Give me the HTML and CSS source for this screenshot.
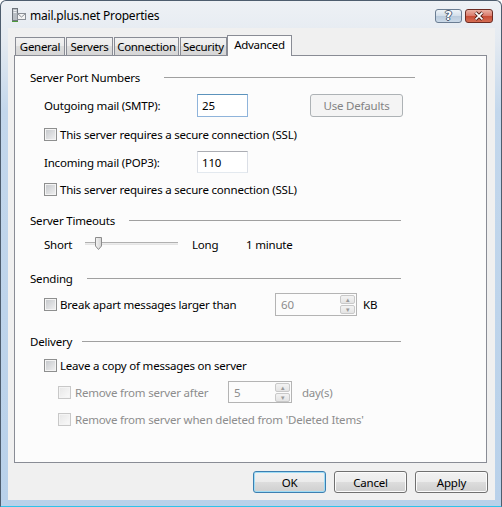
FILE: index.html
```html
<!DOCTYPE html>
<html lang="en">
<head>
    <meta charset="UTF-8">
    <title>mail.plus.net Properties</title>
    <link rel="stylesheet" href="styles.css">
</head>
<body>
    <div class="window">
        <!-- title bar -->
        <div class="titlebar">
            <svg class="app-icon" viewBox="0 0 16 16">
                <rect x="1.5" y="1.5" width="5" height="12" fill="#b9bec4" stroke="#6e747b"/>
                <rect x="2.5" y="3" width="3" height="1" fill="#eef0f2"/>
                <rect x="2.5" y="5" width="3" height="1" fill="#eef0f2"/>
                <rect x="6.5" y="6.5" width="8" height="6" fill="#f4f4f4" stroke="#8a8f96"/>
                <path d="M6.5,6.5 L10.5,10 L14.5,6.5" fill="none" stroke="#8a8f96"/>
                <rect x="1" y="14" width="6" height="1" fill="#4d9a3c"/>
            </svg>
            <span class="title">mail.plus.net Properties</span>
            <div class="caption-buttons">
                <div class="cap-btn help">?</div>
                <div class="cap-btn close">
                    <svg viewBox="0 0 28 14">
                        <path d="M10,3 L18,11 M18,3 L10,11" stroke="#4a1b14" stroke-width="4"/>
                        <path d="M10,3 L18,11 M18,3 L10,11" stroke="#fff" stroke-width="2"/>
                    </svg>
                </div>
            </div>
        </div>

        <div class="client">
            <div class="tabs">
                <div class="tab tab-general">General</div>
                <div class="tab tab-servers">Servers</div>
                <div class="tab tab-connection">Connection</div>
                <div class="tab tab-security">Security</div>
                <div class="tab tab-advanced active">Advanced</div>
            </div>

            <div class="panel">
                <!-- Server Port Numbers -->
                <div class="group-title">
                    <span>Server Port Numbers</span>
                    <span class="rule rule-wide"></span>
                </div>
                <div class="row field-row mt7">
                    <span class="field-label">Outgoing mail (SMTP):</span>
                    <div class="textbox focused">25</div>
                    <button class="btn use-defaults" disabled>Use Defaults</button>
                </div>
                <div class="row mt7">
                    <span class="checkbox"></span>
                    <span class="check-label">This server requires a secure connection (SSL)</span>
                </div>
                <div class="row field-row short mt7">
                    <span class="field-label">Incoming mail (POP3):</span>
                    <div class="textbox">110</div>
                </div>
                <div class="row mt6">
                    <span class="checkbox"></span>
                    <span class="check-label">This server requires a secure connection (SSL)</span>
                </div>

                <!-- Server Timeouts -->
                <div class="group-title mt11">
                    <span>Server Timeouts</span>
                    <span class="rule"></span>
                </div>
                <div class="row mt4">
                    <span class="slider-label">Short</span>
                    <div class="slider">
                        <div class="track"></div>
                        <svg class="thumb" viewBox="0 0 7 13">
                            <defs>
                                <linearGradient id="thumbFill" x1="0" x2="1">
                                    <stop offset="0" stop-color="#f4f4f4"/>
                                    <stop offset="1" stop-color="#d4d4d4"/>
                                </linearGradient>
                            </defs>
                            <path d="M0.5,0.5 H6.5 V9 L3.5,12.5 L0.5,9 Z" fill="url(#thumbFill)" stroke="#8c8c8c"/>
                        </svg>
                    </div>
                    <span class="long-label">Long</span>
                    <span>1 minute</span>
                </div>

                <!-- Sending -->
                <div class="group-title mt14">
                    <span>Sending</span>
                    <span class="rule"></span>
                </div>
                <div class="row field-row mt5">
                    <span class="checkbox"></span>
                    <span class="check-label break-label">Break apart messages larger than</span>
                    <div class="spin kb-spin">
                        <span class="spin-value">60</span>
                        <div class="spin-buttons">
                            <span class="spin-btn">&#9652;</span>
                            <span class="spin-btn">&#9662;</span>
                        </div>
                    </div>
                    <span class="unit">KB</span>
                </div>

                <!-- Delivery -->
                <div class="group-title mt15">
                    <span>Delivery</span>
                    <span class="rule rule-short"></span>
                </div>
                <div class="row mt4">
                    <span class="checkbox"></span>
                    <span class="check-label">Leave a copy of messages on server</span>
                </div>
                <div class="row field-row short sub mt6">
                    <span class="checkbox disabled"></span>
                    <span class="check-label disabled-text days-label">Remove from server after</span>
                    <div class="spin day-spin">
                        <span class="spin-value">5</span>
                        <div class="spin-buttons">
                            <span class="spin-btn">&#9652;</span>
                            <span class="spin-btn">&#9662;</span>
                        </div>
                    </div>
                    <span class="unit days disabled-text">day(s)</span>
                </div>
                <div class="row sub mt6">
                    <span class="checkbox disabled"></span>
                    <span class="check-label disabled-text">Remove from server when deleted from 'Deleted Items'</span>
                </div>
            </div>

            <div class="dialog-buttons">
                <button class="btn default">OK</button>
                <button class="btn">Cancel</button>
                <button class="btn">Apply</button>
            </div>
        </div>
    </div>
</body>
</html>
```

FILE: styles.css
```css
* {
    box-sizing: border-box;
}

body {
    margin: 0;
    font-family: "Noto Sans", "Open Sans", sans-serif;
    font-size: 11.5px;
    letter-spacing: -0.2px;
    color: #000;
    background: #fff;
}

.window {
    width: 502px;
    height: 507px;
    border: 1px solid #4e5d6e;
    border-bottom-color: #2fc3ea;
    border-radius: 6px 6px 0 0;
    padding: 0 6px 6px 7px;
    background: linear-gradient(#eef1f5 0, #e4eaf1 40px, #c3d7ec 110px, #b9d1ea 100%);
    display: flex;
    flex-direction: column;
}

/* title bar */
.titlebar {
    height: 27px;
    display: flex;
    align-items: center;
}

.app-icon {
    width: 16px;
    height: 16px;
    margin-left: 3px;
}

.title {
    margin-left: 3px;
    margin-top: 2px;
    font-size: 12px;
}

.caption-buttons {
    margin-left: auto;
    margin-right: 2px;
    margin-top: 2px;
    display: flex;
    gap: 3px;
}

.cap-btn {
    height: 14px;
    border-radius: 3px;
    display: flex;
    justify-content: center;
    align-items: center;
}

.cap-btn.help {
    width: 27px;
    border: 1px solid #6a7d93;
    background: linear-gradient(#eef3f8, #d3deea 50%, #b9cadc 50%, #cbd9e8);
    color: #fff;
    font-weight: bold;
    font-size: 12px;
    font-family: "DejaVu Sans", sans-serif;
    text-shadow: 1px 0 #4b5d72, -1px 0 #4b5d72, 0 1px #4b5d72, 0 -1px #4b5d72;
}

.cap-btn.close {
    width: 28px;
    border: 1px solid #6d2b22;
    background: linear-gradient(#eab1a3, #d9796a 50%, #c64a34 50%, #d56e54);
}

.cap-btn.close svg {
    width: 26px;
    height: 12px;
}

/* client area */
.client {
    flex: 1;
    background: #f0f0f0;
    display: flex;
    flex-direction: column;
}

.tabs {
    margin: 7px 0 0 7px;
    height: 20px;
    display: flex;
    align-items: flex-end;
    gap: 1px;
}

.tab {
    height: 18px;
    border: 1px solid #898c95;
    border-bottom: none;
    background: linear-gradient(#f2f2f2, #ebebeb 50%, #dddddd 50%, #d6d6d6);
    display: flex;
    justify-content: center;
    align-items: center;
    line-height: 1;
    letter-spacing: -0.3px;
    white-space: nowrap;
}

.tab-general { width: 50px; }
.tab-servers { width: 47px; }
.tab-connection { width: 65px; }
.tab-security { width: 47px; }
.tab-advanced { width: 65px; }

.tab.active {
    height: 21px;
    margin: 0 0 -1px -1px;
    padding-bottom: 3px;
    background: #fcfcfc;
    position: relative;
    z-index: 1;
}

.panel {
    margin: 0 8px 0 6px;
    height: 408px;
    border: 1px solid #898c95;
    background: #fcfcfc;
    padding: 11px 0 0 15px;
    display: flex;
    flex-direction: column;
}

.group-title {
    height: 20px;
    display: flex;
    align-items: center;
}

.rule {
    flex: 1;
    height: 1px;
    background: #a0a0a0;
    margin: 0 85px 0 14px;
}

.rule-wide {
    margin: 0 71px 0 24px;
}

.rule-short {
    margin-left: 10px;
}

.row {
    height: 20px;
    display: flex;
    align-items: center;
    margin-left: 14px;
}

.row.field-row {
    height: 23px;
}

.row.short {
    height: 22px;
}

.row.sub {
    margin-left: 28px;
}

.mt4 { margin-top: 4px; }
.mt5 { margin-top: 5px; }
.mt6 { margin-top: 6px; }
.mt7 { margin-top: 7px; }
.mt11 { margin-top: 11px; }
.mt14 { margin-top: 14px; }
.mt15 { margin-top: 15px; }

.field-label {
    width: 153px;
}

.textbox {
    width: 51px;
    height: 100%;
    border: 1px solid #dbdfe6;
    border-top-color: #abadb3;
    border-bottom-color: #e3e9ef;
    background: #fff;
    padding-left: 4px;
    display: flex;
    align-items: center;
}

.textbox.focused {
    border-color: #8fb4db;
    border-top-color: #5c93bc;
}

.checkbox {
    width: 13px;
    height: 13px;
    border: 1px solid #8e8f8f;
    background: linear-gradient(135deg, #c3c6ca, #f2f2f2);
    box-shadow: inset 0 0 0 1px #f4f4f4;
    flex: none;
}

.checkbox.disabled {
    border-color: #c8c8c8;
    background: linear-gradient(135deg, #e6e6e6, #fafafa);
}

.check-label {
    margin-left: 3px;
}

.sub .check-label {
    margin-left: 4px;
}

.disabled-text {
    color: #8d8d8d;
}

/* buttons */
.btn {
    width: 73px;
    height: 22px;
    border: 1px solid #707070;
    border-radius: 3px;
    background: linear-gradient(#f2f2f2, #ebebeb 50%, #dddddd 50%, #cfcfcf);
    box-shadow: inset 0 0 0 1px #fbfbfb;
    font-family: inherit;
    font-size: inherit;
    letter-spacing: inherit;
    color: #000;
    padding: 0;
}

.btn.default {
    border-color: #3c7fb1;
    box-shadow: inset 0 0 0 1px #9fdcf5;
}

.btn.use-defaults {
    width: 93px;
    height: 100%;
    margin-left: 62px;
    border-color: #adb2b5;
    background: #f4f4f4;
    box-shadow: none;
    color: #838383;
}

/* slider */
.slider-label {
    width: 41px;
}

.slider {
    width: 93px;
    height: 14px;
    position: relative;
}

.track {
    margin-top: 5px;
    height: 3px;
    border-top: 1px solid #b0b0b0;
    border-bottom: 1px solid #e4e4e4;
    background: #ececec;
}

.thumb {
    position: absolute;
    left: 10px;
    top: 0;
    width: 7px;
    height: 13px;
}

.long-label {
    width: 54px;
    margin-left: 14px;
}

/* spin boxes */
.break-label {
    width: 215px;
}

.days-label {
    width: 153px;
}

.spin {
    height: 100%;
    border: 1px solid #b4b4b4;
    background: #fcfcfc;
    display: flex;
    align-items: center;
    justify-content: space-between;
    padding: 1px;
    color: #8d8d8d;
}

.kb-spin {
    width: 82px;
}

.day-spin {
    width: 64px;
}

.spin-value {
    padding-left: 4px;
}

.spin-buttons {
    width: 15px;
    height: 100%;
    display: flex;
    flex-direction: column;
    gap: 1px;
}

.spin-btn {
    flex: 1;
    border: 1px solid #c9c9c9;
    border-radius: 2px;
    background: linear-gradient(#f3f3f3, #e4e4e4);
    color: #9a9a9a;
    font-size: 7px;
    line-height: 1;
    display: flex;
    justify-content: center;
    align-items: center;
}

.unit {
    margin-left: 6px;
}

.unit.days {
    margin-left: 10px;
}

.dialog-buttons {
    margin: 8px 7px 0 0;
    display: flex;
    justify-content: flex-end;
    gap: 8px;
}
```
